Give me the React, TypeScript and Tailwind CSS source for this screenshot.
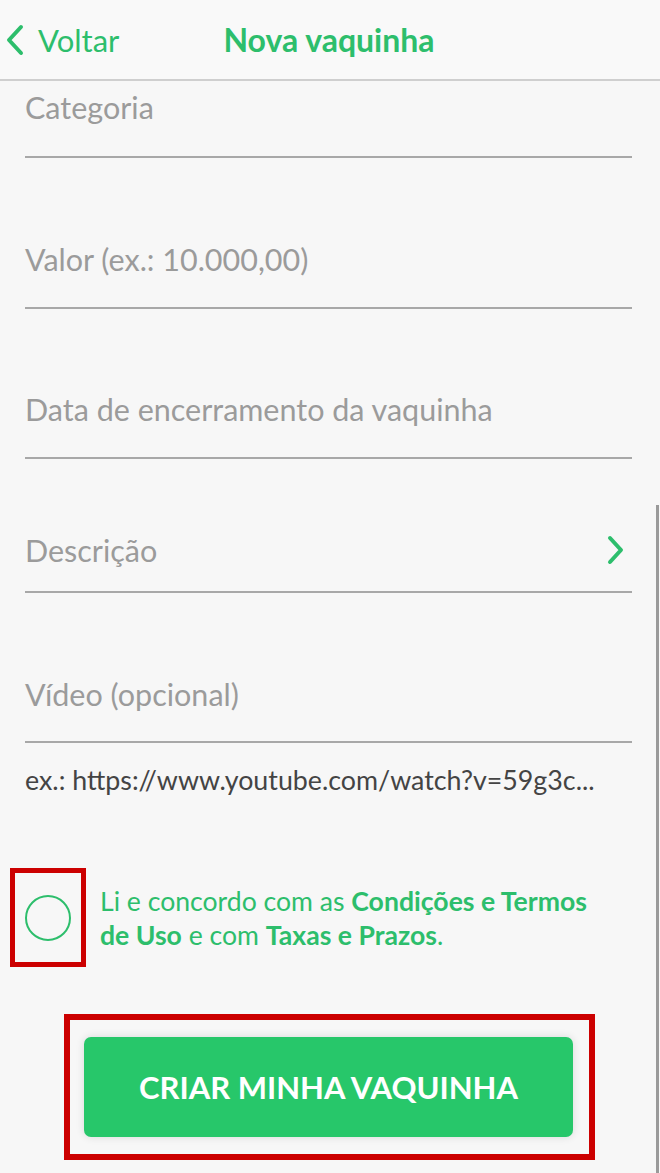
import React from 'react'

function Field({ label, className, chevron }: { label: string; className: string; chevron?: boolean }) {
  return (
    <div className={`ml-[25px] mr-[28px] flex items-center justify-between border-b-2 border-[#a8a8a8] ${className}`}>
      <span className="text-[30.5px] leading-[36px] text-[#9b9b9b]">{label}</span>
      {chevron && (
        <svg width="22" height="32" viewBox="0 0 22 32" className="mr-[5px]">
          <path d="M5 4 L16 16 L5 28" fill="none" stroke="#2dbe6c" strokeWidth="4" strokeLinecap="round" strokeLinejoin="round" />
        </svg>
      )}
    </div>
  )
}

export default function App() {
  return (
    <div className="relative min-h-[1173px] w-[660px] overflow-hidden bg-[#f7f7f7]" style={{ fontFamily: 'Lato, "Noto Sans", sans-serif' }}>
      {/* Top bar */}
      <div className="flex h-[81px] items-center border-b-2 border-[#cfcfcf] bg-[#f9f9f9]">
        <div className="flex items-center pl-[4px]">
          <svg width="22" height="34" viewBox="0 0 22 34">
            <path d="M17 4 L5 17 L17 30" fill="none" stroke="#2dbe6c" strokeWidth="4" strokeLinecap="round" strokeLinejoin="round" />
          </svg>
          <span className="ml-[12px] text-[31px] leading-[38px] text-[#2dbe6c]">Voltar</span>
        </div>
        <h1 className="ml-[104px] text-[32px] font-bold leading-[38px] text-[#2dbe6c]">Nova vaquinha</h1>
      </div>

      {/* Form */}
      <Field label="Categoria" className="pt-[8px] pb-[31px]" />
      <Field label="Valor (ex.: 10.000,00)" className="mt-[83px] pb-[30px]" />
      <Field label="Data de encerramento da vaquinha" className="mt-[82px] pb-[30px]" />
      <Field label="Descrição" className="mt-[73px] pb-[23px]" chevron />
      <Field label="Vídeo (opcional)" className="mt-[83px] pb-[29px]" />

      <p className="mx-[25px] mt-[21px] text-[26.8px] leading-[32px] text-[#444444]">
        ex.: https://www.youtube.com/watch?v=59g3c...
      </p>

      {/* Terms */}
      <div className="mt-[72px] flex items-center">
        <div className="ml-[10px] flex h-[99px] w-[76px] items-center justify-center border-[5px] border-[#cc0000]">
          <div className="h-[46px] w-[46px] rounded-full border-[2.5px] border-[#2dbe6c]" />
        </div>
        <p className="ml-[14px] w-[505px] text-[26.6px] leading-[34px] text-[#2dbe6c]">
          Li e concordo com as <span className="font-bold">Condições e Termos</span>{' '}
          <span className="font-bold">de Uso</span> e com <span className="font-bold">Taxas e Prazos</span>.
        </p>
      </div>

      {/* Submit */}
      <div className="ml-[64px] mt-[47px] w-[531px] border-[6px] border-[#cc0000] pl-[14px] pr-[16px] pt-[17px] pb-[17px]">
        <button className="flex h-[100px] w-full items-center justify-center rounded-[7px] bg-[#27c76a] text-[31px] font-bold text-white shadow-[0_0_8px_rgba(0,0,0,0.12)]">
          CRIAR MINHA VAQUINHA
        </button>
      </div>

      {/* Scroll indicator */}
      <div className="absolute right-[1px] top-[505px] bottom-0 w-[3px] bg-[#9a9a9a]" />
    </div>
  )
}
